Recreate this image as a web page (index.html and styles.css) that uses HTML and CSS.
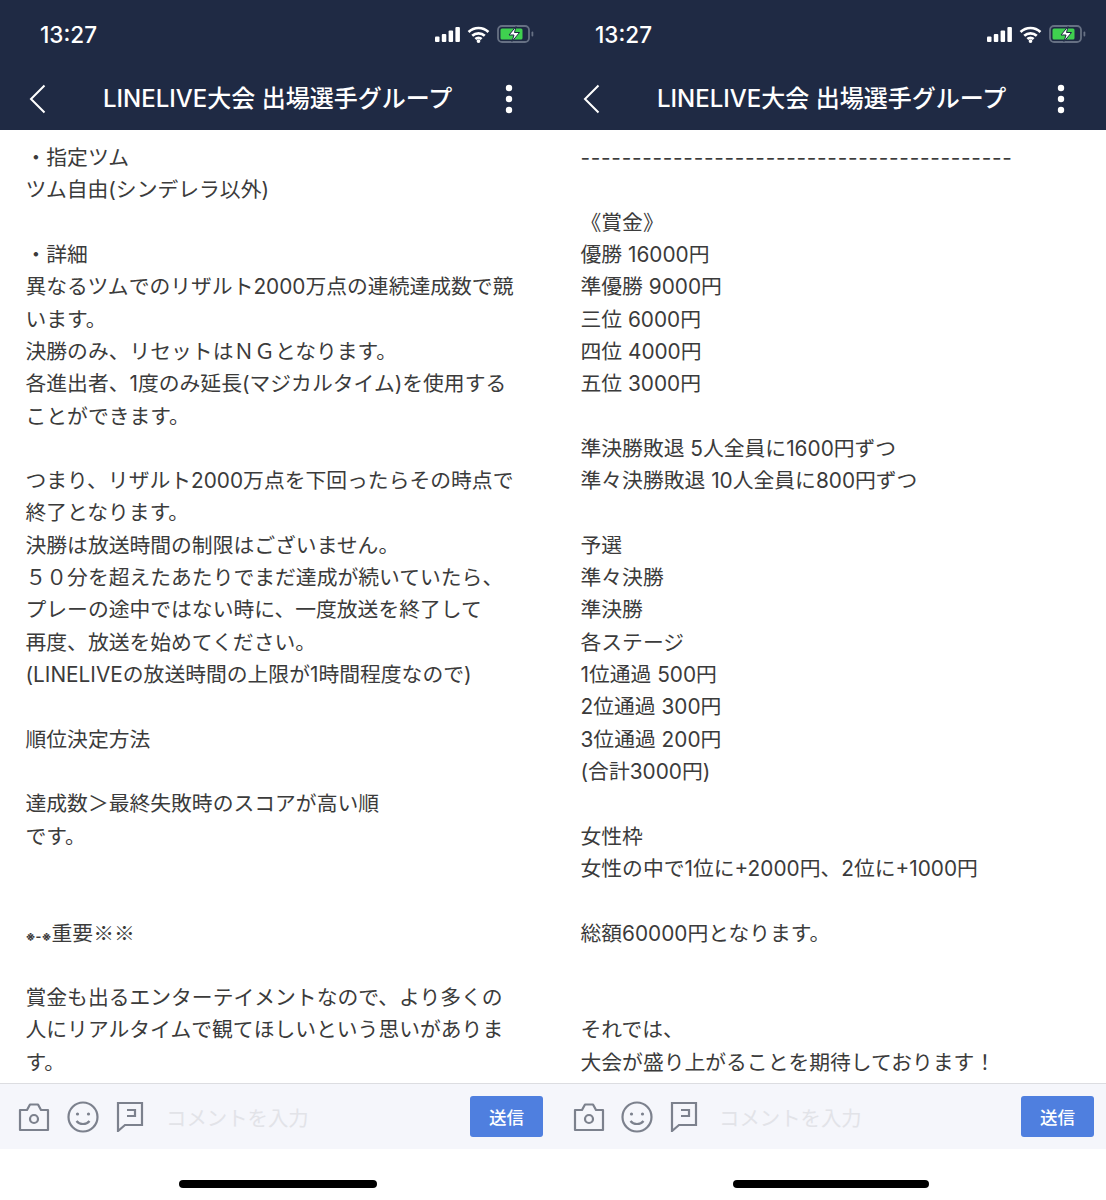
FILE: index.html
```html
<!DOCTYPE html>
<html lang="ja">
<head>
    <meta charset="UTF-8">
    <meta name="viewport" content="width=device-width, initial-scale=1.0">
    <title>LINELIVE大会 出場選手グループ</title>
    <link rel="stylesheet" href="styles.css">
</head>
<body>
    <div class="screens">
        <section class="phone">
            <div class="status-bar">
                <span class="clock">13:27</span>
                <div class="status-icons">
                    <svg class="icon-signal" viewBox="0 0 25 15"><rect x="0" y="9.500" width="4.500" height="5.500" rx="1"/><rect x="6.800" y="7" width="4.500" height="8" rx="1"/><rect x="13.600" y="3.500" width="4.500" height="11.500" rx="1"/><rect x="20.400" y="0" width="4.500" height="15" rx="1"/></svg>
                    <svg class="icon-wifi" viewBox="0 0 22 16"><path d="M1.500 5.500a14 14 0 0 1 19 0M5 9.200a9 9 0 0 1 12 0M8 12.400a4.500 4.500 0 0 1 6 0" fill="none" stroke="#fff" stroke-width="2.600"/><circle cx="11" cy="14.300" r="1.800" fill="#fff"/></svg>
                    <svg class="icon-battery" viewBox="0 0 37 18"><rect x="1" y="1" width="31" height="16" rx="4" fill="none" stroke="#667083" stroke-width="1.800"/><rect x="3.500" y="3.500" width="22" height="11" rx="1.500" fill="#3fd14f"/><path d="M19 1.500l-7 8.500h5l-2 6.500 7.500-9h-5z" fill="#fff" stroke="#1f2a44" stroke-width="1"/><rect x="34.500" y="6.500" width="1.800" height="5" rx="0.900" fill="#667083"/></svg>
                </div>
            </div>
            <header class="nav-bar">
                <svg class="icon-back" viewBox="0 0 17 30"><path d="M15.500 1.500L2 15l13.500 13.500" fill="none" stroke="#fff" stroke-width="2"/></svg>
                <h1 class="nav-title">LINELIVE大会 出場選手グループ</h1>
                <svg class="icon-more" viewBox="0 0 8 30"><circle cx="4" cy="4" r="3.200"/><circle cx="4" cy="15" r="3.200"/><circle cx="4" cy="26" r="3.200"/></svg>
            </header>
            <div class="message">・指定ツム
ツム自由(シンデレラ以外)

・詳細
異なるツムでのリザルト2000万点の連続達成数で競
います。
決勝のみ、リセットはＮＧとなります。
各進出者、1度のみ延長(マジカルタイム)を使用する
ことができます。

つまり、リザルト2000万点を下回ったらその時点で
終了となります。
決勝は放送時間の制限はございません。
５０分を超えたあたりでまだ達成が続いていたら、
プレーの途中ではない時に、一度放送を終了して
再度、放送を始めてください。
(LINELIVEの放送時間の上限が1時間程度なので)

順位決定方法

達成数＞最終失敗時のスコアが高い順
です。


<span class="mark-small">※-※</span><span class="mark-wide">重要※※</span>

賞金も出るエンターテイメントなので、より多くの
人にリアルタイムで観てほしいという思いがありま
す。</div>
            <footer class="composer">
                <svg class="icon-camera" viewBox="0 0 32 30"><path d="M2 8h7l3-5.500h8L23 8h7v20H2z" fill="none" stroke="#7c818d" stroke-width="2.200" stroke-linejoin="round"/><circle cx="16" cy="17" r="4" fill="none" stroke="#7c818d" stroke-width="2.200"/></svg>
                <svg class="icon-smile" viewBox="0 0 32 32"><circle cx="16" cy="16" r="14.500" fill="none" stroke="#7c818d" stroke-width="2.200"/><circle cx="10.500" cy="13" r="1.600" fill="#7c818d"/><circle cx="21.500" cy="13" r="1.600" fill="#7c818d"/><path d="M9.500 20c3 4 10 4 13 0" fill="none" stroke="#7c818d" stroke-width="2.200"/></svg>
                <svg class="icon-note" viewBox="0 0 28 31"><path d="M2 2h24v22H9l-7 6z" fill="none" stroke="#7c818d" stroke-width="2.200"/><path d="M11 9h8v6h-8" fill="none" stroke="#7c818d" stroke-width="2.200"/></svg>
                <span class="placeholder">コメントを入力</span>
                <button class="send">送信</button>
            </footer>
            <div class="home-area"><span class="home-bar"></span></div>
        </section>

        <section class="phone phone-right">
            <div class="status-bar">
                <span class="clock">13:27</span>
                <div class="status-icons">
                    <svg class="icon-signal" viewBox="0 0 25 15"><rect x="0" y="9.500" width="4.500" height="5.500" rx="1"/><rect x="6.800" y="7" width="4.500" height="8" rx="1"/><rect x="13.600" y="3.500" width="4.500" height="11.500" rx="1"/><rect x="20.400" y="0" width="4.500" height="15" rx="1"/></svg>
                    <svg class="icon-wifi" viewBox="0 0 22 16"><path d="M1.500 5.500a14 14 0 0 1 19 0M5 9.200a9 9 0 0 1 12 0M8 12.400a4.500 4.500 0 0 1 6 0" fill="none" stroke="#fff" stroke-width="2.600"/><circle cx="11" cy="14.300" r="1.800" fill="#fff"/></svg>
                    <svg class="icon-battery" viewBox="0 0 37 18"><rect x="1" y="1" width="31" height="16" rx="4" fill="none" stroke="#667083" stroke-width="1.800"/><rect x="3.500" y="3.500" width="22" height="11" rx="1.500" fill="#3fd14f"/><path d="M19 1.500l-7 8.500h5l-2 6.500 7.500-9h-5z" fill="#fff" stroke="#1f2a44" stroke-width="1"/><rect x="34.500" y="6.500" width="1.800" height="5" rx="0.900" fill="#667083"/></svg>
                </div>
            </div>
            <header class="nav-bar">
                <svg class="icon-back" viewBox="0 0 17 30"><path d="M15.500 1.500L2 15l13.500 13.500" fill="none" stroke="#fff" stroke-width="2"/></svg>
                <h1 class="nav-title">LINELIVE大会 出場選手グループ</h1>
                <svg class="icon-more" viewBox="0 0 8 30"><circle cx="4" cy="4" r="3.200"/><circle cx="4" cy="15" r="3.200"/><circle cx="4" cy="26" r="3.200"/></svg>
            </header>
            <div class="message"><span class="dash-line">------------------------------------------</span>

《賞金》
優勝 16000円
準優勝 9000円
三位 6000円
四位 4000円
五位 3000円

準決勝敗退 5人全員に1600円ずつ
準々決勝敗退 10人全員に800円ずつ

予選
準々決勝
準決勝
各ステージ
1位通過 500円
2位通過 300円
3位通過 200円
(合計3000円)

女性枠
女性の中で1位に+2000円、2位に+1000円

総額60000円となります。


それでは、
大会が盛り上がることを期待しております！</div>
            <footer class="composer">
                <svg class="icon-camera" viewBox="0 0 32 30"><path d="M2 8h7l3-5.500h8L23 8h7v20H2z" fill="none" stroke="#7c818d" stroke-width="2.200" stroke-linejoin="round"/><circle cx="16" cy="17" r="4" fill="none" stroke="#7c818d" stroke-width="2.200"/></svg>
                <svg class="icon-smile" viewBox="0 0 32 32"><circle cx="16" cy="16" r="14.500" fill="none" stroke="#7c818d" stroke-width="2.200"/><circle cx="10.500" cy="13" r="1.600" fill="#7c818d"/><circle cx="21.500" cy="13" r="1.600" fill="#7c818d"/><path d="M9.500 20c3 4 10 4 13 0" fill="none" stroke="#7c818d" stroke-width="2.200"/></svg>
                <svg class="icon-note" viewBox="0 0 28 31"><path d="M2 2h24v22H9l-7 6z" fill="none" stroke="#7c818d" stroke-width="2.200"/><path d="M11 9h8v6h-8" fill="none" stroke="#7c818d" stroke-width="2.200"/></svg>
                <span class="placeholder">コメントを入力</span>
                <button class="send">送信</button>
            </footer>
            <div class="home-area"><span class="home-bar"></span></div>
        </section>
    </div>
</body>
</html>
```

FILE: styles.css
```css
body { margin: 0; background: #fff; font-family: Inter, "Noto Sans CJK JP", sans-serif; overflow: hidden; }
svg { display: block; flex: none; }

.screens { display: grid; grid-template-columns: 553px 553px; height: 1200px; }
.phone { display: flex; flex-direction: column; height: 1200px; overflow: hidden; }

.status-bar { display: flex; align-items: center; justify-content: space-between; height: 68px; padding: 0 19px 0 40px; background: #1f2a44; color: #fff; }
.clock { font-size: 22.500px; font-weight: 500; }
.status-icons { display: flex; align-items: center; gap: 7px; }
.icon-signal { width: 25px; height: 15px; fill: #fff; }
.icon-wifi { width: 23px; height: 17px; }
.icon-battery { width: 37px; height: 18px; }

.nav-bar { display: flex; align-items: center; height: 62px; padding: 0 40px 0 29px; background: #1f2a44; color: #fff; }
.nav-title { flex: 1; margin: 0 0 1px 57px; font-size: 24px; font-weight: 500; line-height: 32px; white-space: nowrap; }
.icon-back { width: 17px; height: 30px; }
.icon-more { width: 8px; height: 30px; fill: #fff; }

.message { flex: 1; min-height: 0; padding: 12px 0 0 25.500px; overflow: hidden; font-size: 20.800px; line-height: 32.320px; color: #3b3b3b; white-space: pre-line; }
.mark-small { font-size: 12.500px; font-weight: 700; line-height: 1; }
.mark-wide { font-family: "Noto Sans CJK JP", sans-serif; line-height: 1; }
.dash-line { letter-spacing: 0.720px; white-space: nowrap; }

.composer { display: flex; align-items: center; height: 66px; box-sizing: border-box; padding: 0 10px 0 18px; background: #f5f6fb; border-top: 1px solid #dcdde1; }
.icon-camera { width: 32px; height: 30px; }
.icon-smile { width: 32px; height: 32px; margin-left: 17px; }
.icon-note { width: 28px; height: 31px; margin-left: 17px; }
.placeholder { flex: 1; margin-left: 22px; font-size: 20.400px; color: #e2e3e8; white-space: nowrap; }
.send { width: 73px; height: 41px; padding: 0; border: 0; border-radius: 3px; background: #4f7fdf; color: #fff; font-family: inherit; font-size: 17.500px; font-weight: 500; }

.home-area { display: flex; justify-content: center; height: 51px; padding: 31px 0 0 2px; box-sizing: border-box; background: #fff; }
.home-bar { width: 198px; height: 8px; border-radius: 4px; background: #000; }

.phone-right .status-bar { padding-left: 42px; padding-right: 20px; }
.phone-right .nav-bar { padding-left: 30px; padding-right: 41px; }
.phone-right .message { padding-left: 27.500px; }
.phone-right .composer { padding-left: 20px; padding-right: 12px; }
.phone-right .icon-smile { margin-left: 16px; }
.phone-right .placeholder { margin-left: 21px; }
.phone-right .home-bar { width: 196px; }
```
